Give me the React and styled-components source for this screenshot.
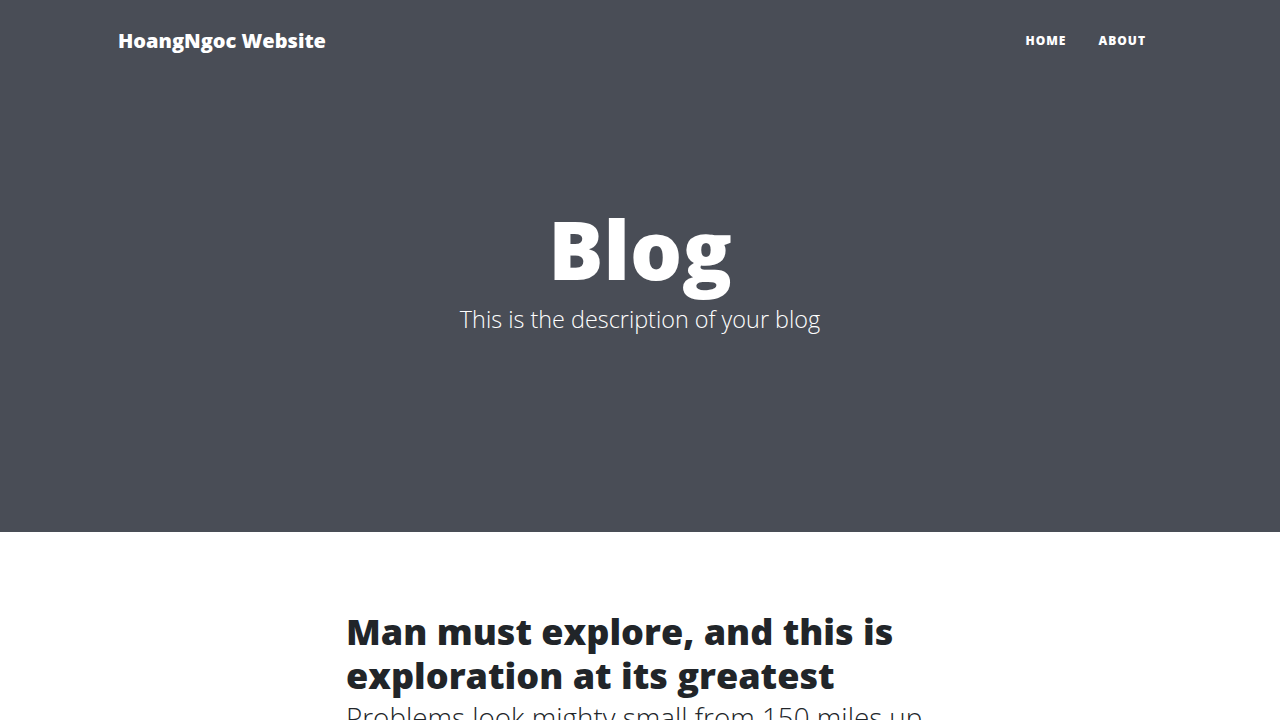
import styled, { createGlobalStyle } from 'styled-components';

const GlobalStyle = createGlobalStyle`
  body {
    margin: 0;
    font-family: "Open Sans", "Liberation Sans", sans-serif;
    color: #212529;
    background: #fff;
  }
`;

const POST = {
  title: 'Man must explore, and this is exploration at its greatest',
  subtitle: 'Problems look mighty small from 150 miles up',
};

function App() {
  return (
    <>
      <GlobalStyle />
      <Masthead>
        <NavBar>
          <Brand href="#">HoangNgoc Website</Brand>
          <NavLinks>
            <NavLink href="#">Home</NavLink>
            <NavLink href="#">About</NavLink>
          </NavLinks>
        </NavBar>
        <Hero>
          <HeroTitle>Blog</HeroTitle>
          <HeroSubtitle>This is the description of your blog</HeroSubtitle>
        </Hero>
      </Masthead>
      <Main>
        <PostPreview>
          <PostTitle>{POST.title}</PostTitle>
          <PostSubtitle>{POST.subtitle}</PostSubtitle>
        </PostPreview>
      </Main>
    </>
  );
}

export default App;

export const Masthead = styled.header`
  background-color: #494d56;
  height: 532px;
  display: flex;
  flex-direction: column;
`;

export const NavBar = styled.nav`
  height: 80px;
  display: flex;
  align-items: center;
  justify-content: space-between;
  padding: 0 134px 0 118px;
`;

export const Brand = styled.a`
  color: #fff;
  font-size: 20px;
  font-weight: 800;
  text-decoration: none;
`;

export const NavLinks = styled.div`
  display: flex;
  gap: 32px;
`;

export const NavLink = styled.a`
  color: #fff;
  font-size: 12px;
  font-weight: 800;
  letter-spacing: 1px;
  text-transform: uppercase;
  text-decoration: none;
`;

export const Hero = styled.div`
  display: flex;
  flex-direction: column;
  align-items: center;
  padding-top: 120px;
  color: #fff;
`;

export const HeroTitle = styled.h1`
  margin: 0;
  font-size: 82px;
  font-weight: 800;
  line-height: 96px;
`;

export const HeroSubtitle = styled.span`
  margin-top: 11px;
  font-size: 23.4px;
  font-weight: 300;
  line-height: 1.1;
`;

export const Main = styled.main`
  display: flex;
  justify-content: center;
  padding-top: 78px;
`;

export const PostPreview = styled.article`
  width: 588px;
`;

export const PostTitle = styled.h2`
  margin: 0;
  font-size: 36px;
  font-weight: 800;
  line-height: 44px;
`;

export const PostSubtitle = styled.h3`
  margin: 3px 0 0;
  font-size: 27.8px;
  font-weight: 300;
  line-height: 1.2;
  white-space: nowrap;
`;
